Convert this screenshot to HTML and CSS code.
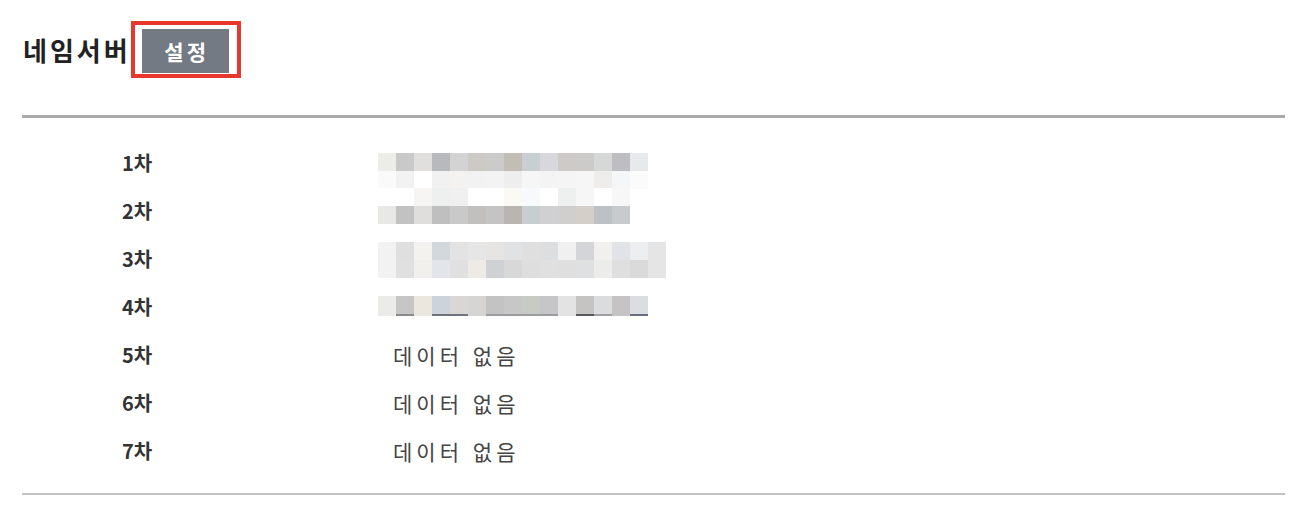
FILE: index.html
```html
<!DOCTYPE html>
<html lang="ko">
<head>
    <meta charset="UTF-8">
    <meta name="viewport" content="width=device-width, initial-scale=1.0">
    <title>네임서버</title>
    <link rel="stylesheet" href="styles.css">
</head>
<body>
    <div class="page">
        <div class="head">
            <h2 class="title">네임서버</h2>
            <span class="mark"><button class="btn">설정</button></span>
        </div>

        <div class="list">
            <div class="row">
                <span class="label">1차</span>
                <div class="mask m1"><span class="strip s1a"></span><span class="strip s1b"></span></div>
            </div>
            <div class="row">
                <span class="label">2차</span>
                <div class="mask m2"><span class="strip s2a"></span><span class="strip s2b"></span></div>
            </div>
            <div class="row">
                <span class="label">3차</span>
                <div class="mask m3"><span class="strip s3a"></span><span class="strip s3b"></span></div>
            </div>
            <div class="row">
                <span class="label">4차</span>
                <div class="mask m4"><span class="strip s4a"></span><span class="line s4b"></span></div>
            </div>
            <div class="row">
                <span class="label">5차</span>
                <span class="empty">데이터 없음</span>
            </div>
            <div class="row">
                <span class="label">6차</span>
                <span class="empty">데이터 없음</span>
            </div>
            <div class="row">
                <span class="label">7차</span>
                <span class="empty">데이터 없음</span>
            </div>
        </div>
    </div>
</body>
</html>
```

FILE: styles.css
```css
body { margin: 0; background: #fff; color: #333; font-family: "Noto Sans CJK KR", "Liberation Sans", sans-serif; }
.page { padding: 21px 7px 0 22px; }

.head { display: flex; align-items: center; height: 57px; margin-bottom: 37px; }
.title { margin: 0 0 0 1px; font-size: 26px; font-weight: bold; color: #222; letter-spacing: 3px; }
.mark { display: flex; border: 4px solid #e8372c; padding: 4px 8px 1px 7px; background: #fff; }
.btn { width: 87px; height: 44px; padding: 0 0 0 3px; border: none; background: #737a83; color: #fff; font: bold 21px "Noto Sans CJK KR", sans-serif; letter-spacing: 3px; }

.list { border-top: 3px solid #a9a9a9; border-bottom: 2px solid #c2c2c2; padding: 21px 0 18px; }
.row { display: grid; grid-template-columns: 256px 1fr; align-items: start; height: 48px; padding-left: 100px; }
.label { line-height: 48px; font-size: 20px; font-weight: bold; color: #333; }
.empty { line-height: 48px; padding-left: 15px; font-size: 21px; letter-spacing: 4px; color: #444; }

/* blurred values */
.mask { display: flex; flex-direction: column; }
.strip { display: block; height: 18px; }
.line { display: block; height: 2px; }
.m1 { margin-top: 14px; }
.m2 { margin-top: 1px; }
.m3 { margin-top: 7px; }
.m4 { margin-top: 13px; }

.s1a { width: 270px; background: linear-gradient(to right, #ecede9 0 18px, #c9c9c9 18px 36px, #e0dfdd 36px 54px, #b8b9bd 54px 72px, #d3d3d3 72px 90px, #cdc9c5 90px 108px, #cbcbcb 108px 126px, #c3bdb6 126px 144px, #c8cfd3 144px 162px, #d8d8dc 162px 180px, #cdcac7 180px 198px, #cdcbca 198px 216px, #d6d8d7 216px 234px, #bebec2 234px 252px, #e8e9eb 252px 270px); }
.s1b { width: 270px; background: linear-gradient(to right, #fafafa 0 18px, #f2f2f2 18px 36px, #fff 36px 54px, #f1f1f1 54px 72px, #f3f2f1 72px 90px, #f1f2f1 90px 108px, #f3f3f3 108px 126px, #eeeeef 126px 144px, #f6f6f6 144px 162px, #f4f4f5 162px 180px, #f5f5f5 180px 198px, #f6f6f6 198px 216px, #efedeb 216px 234px, #f4f6f8 234px 252px, #fbfbfb 252px 270px); }
.s2a { width: 252px; background: linear-gradient(to right, #fff 0 36px, #f6f5f3 36px 54px, #eef0ef 54px 72px, #eff0ef 72px 90px, #fff 90px 126px, #faf9f6 126px 144px, #f7f9fc 144px 162px, #fff 162px 180px, #eef0ef 180px 198px, #f5f6f5 198px 216px, #fff 216px 234px, #f7f7f7 234px 252px); }
.s2b { width: 252px; background: linear-gradient(to right, #e8e8e6 0 18px, #c2c2c2 18px 36px, #dfdedc 36px 54px, #bfbfbf 54px 72px, #c9c9c9 72px 90px, #c1c0be 90px 108px, #c4c4c4 108px 126px, #bab5b1 126px 144px, #c7ced1 144px 162px, #d0d0d2 162px 180px, #d0cfce 180px 198px, #d5cfc9 198px 216px, #bcc1c5 216px 234px, #c9cacd 234px 252px); }
.s3a { width: 288px; background: linear-gradient(to right, #f2f2f2 0 18px, #dfdfdf 18px 36px, #f4f2ee 36px 54px, #d3d8dd 54px 72px, #e3e3e3 72px 90px, #e6e6e6 90px 108px, #e6e5e3 108px 126px, #e1e2e4 126px 144px, #dfdfdf 144px 162px, #dddedf 162px 180px, #f0f0f0 180px 198px, #d3d5d8 198px 216px, #f1f0ee 216px 234px, #e2e3e6 234px 252px, #eceeef 252px 270px, #e5e5e5 270px 288px); }
.s3b { width: 288px; background: linear-gradient(to right, #f2f2f2 0 18px, #e0e0e0 18px 36px, #f1f0ed 36px 54px, #e2e6ea 54px 72px, #e0e0e0 72px 90px, #eeebe7 90px 108px, #d0d1d5 108px 126px, #d9d8d9 126px 144px, #dedede 144px 162px, #e0e0e0 162px 180px, #dfdfdf 180px 198px, #dfe0e2 198px 216px, #ececeb 216px 234px, #dfdfe0 234px 252px, #dadada 252px 270px, #e5e5e5 270px 288px); }
.s4a { width: 270px; background: linear-gradient(to right, #ebebe9 0 18px, #c6c6c6 18px 36px, #ebe6de 36px 54px, #ccd3db 54px 72px, #d9d7d6 72px 90px, #d6d5d3 90px 108px, #c3c3c3 108px 126px, #c7c7c8 126px 144px, #c8cac6 144px 162px, #c6c5c8 162px 180px, #e3e3e3 180px 198px, #c6c4c2 198px 216px, #dbdcde 216px 234px, #c5c3c3 234px 252px, #dcdde0 252px 270px); }
.s4b { width: 270px; background: linear-gradient(to right, #ebebe9 0 18px, #8a8a8a 18px 36px, #ebe6de 36px 54px, #6f747a 54px 90px, #d6d5d3 90px 108px, #9a9ca0 108px 180px, #e3e3e3 180px 198px, #55575c 198px 216px, #a0a0a4 216px 234px, #c5c3c3 234px 252px, #6a7080 252px 270px); }
```
